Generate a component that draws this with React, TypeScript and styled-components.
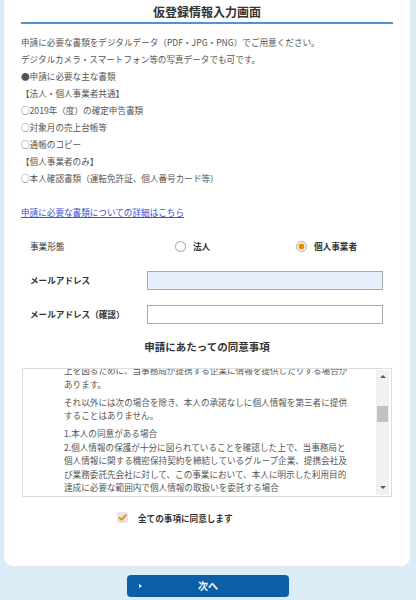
import React, { useLayoutEffect, useRef, useState } from "react";
import styled, { createGlobalStyle } from "styled-components";

const GlobalStyle = createGlobalStyle`
  body {
    margin: 0;
    background: #dcecf7;
    font-family: "Noto Sans CJK JP", "Noto Sans", sans-serif;
  }
`;

const Card = styled.div`
  margin-left: 4px;
  width: 406px;
  box-sizing: border-box;
  background: #fff;
  border-radius: 0 0 9px 9px;
  padding: 4px 17px 41px;
`;

const Title = styled.h1`
  margin: 0;
  padding-bottom: 2px;
  font-size: 12px;
  line-height: 16px;
  font-weight: bold;
  text-align: center;
  color: #333;
  border-bottom: 2px solid #4f93d2;
`;

const Intro = styled.div`
  margin-top: 9.5px;
  font-size: 8.6px;
  line-height: 17px;
  color: #555;
`;

const Line = styled.p`
  margin: 0;
`;

const DetailLink = styled.a`
  display: block;
  margin-top: 17px;
  color: #3b4fd4;
  text-decoration: underline;
`;

const Form = styled.div`
  margin-top: 8.5px;
  padding: 0 10px 0 9px;
`;

const FormRow = styled.div`
  display: grid;
  grid-template-columns: 117px 1fr;
  align-items: center;
  height: 34px;
`;

const Label = styled.span<{ $bold?: boolean }>`
  font-size: 8.6px;
  font-weight: ${p => (p.$bold ? "bold" : "normal")};
  color: #333;
`;

const TextInput = styled.input<{ $filled?: boolean }>`
  width: 100%;
  height: 19px;
  box-sizing: border-box;
  margin: 0;
  border: 1px solid #a9a9a9;
  background: ${p => (p.$filled ? "#e8f0fe" : "#fff")};
  outline: none;
`;

const RadioGroup = styled.div`
  display: flex;
  padding-left: 28px;
`;

const RadioOption = styled.label`
  display: flex;
  align-items: center;
  gap: 7px;
  width: 121px;
  font-size: 8.6px;
  font-weight: bold;
  color: #333;
`;

const RadioMark = styled.input.attrs({ type: "radio" })`
  appearance: none;
  margin: 0;
  width: 11px;
  height: 11px;
  border-radius: 50%;
  border: 1px solid #aaa;
  background: #fff;
  box-shadow: 0 0 1px rgba(0, 0, 0, 0.15);

  &:checked {
    border-color: #bbb;
    background: #f08a00;
    box-shadow: inset 0 0 0 1.5px #fff;
  }
`;

const SectionTitle = styled.h2`
  margin: 8px 0 13.5px;
  font-size: 10.5px;
  line-height: 15px;
  font-weight: bold;
  text-align: center;
  color: #333;
`;

const ScrollFrame = styled.div`
  position: relative;
  margin: 0 1px;
  height: 129px;
  box-sizing: border-box;
  border: 1px solid #ddd;
`;

const ScrollBox = styled.div`
  height: 100%;
  box-sizing: border-box;
  overflow-y: scroll;
  padding: 0 36px 0 41px;
  font-size: 8.6px;
  line-height: 13.5px;
  color: #555;
  scrollbar-width: none;

  &::-webkit-scrollbar {
    display: none;
  }
`;

const Para = styled.p`
  margin: 0 0 4.5px;
`;

const ScrollBar = styled.div`
  position: absolute;
  top: 1px;
  bottom: 1px;
  right: 2px;
  width: 13px;
  display: flex;
  flex-direction: column;
  background: #f1f1f1;
`;

const ScrollArrow = styled.div<{ $down?: boolean }>`
  flex: none;
  height: 14px;
  display: flex;
  align-items: center;
  justify-content: center;

  &::before {
    content: "";
    border-left: 3px solid transparent;
    border-right: 3px solid transparent;
    ${p => (p.$down ? "border-top: 3px solid #555;" : "border-bottom: 3px solid #555;")}
  }
`;

const ScrollTrack = styled.div`
  position: relative;
  flex: 1;
`;

const ScrollThumb = styled.div`
  position: absolute;
  left: 1px;
  right: 1px;
  background: #c1c1c1;
`;

const AgreeRow = styled.label`
  display: flex;
  align-items: center;
  gap: 10px;
  margin-top: 14px;
  padding-left: 96px;
  font-size: 8.6px;
  line-height: 14px;
  font-weight: bold;
  color: #333;
  cursor: pointer;
`;

const CheckBox = styled.span`
  display: flex;
  align-items: center;
  justify-content: center;
  width: 11px;
  height: 11px;
  border-radius: 2px;
  background: #e4e4e4;
`;

const NextButton = styled.button`
  position: relative;
  display: block;
  margin: 9px auto 0;
  width: 162px;
  height: 22px;
  border: none;
  border-radius: 4px;
  background: #0c5ea7;
  color: #fff;
  font-family: inherit;
  font-size: 10px;
  font-weight: bold;

  &::before {
    content: "";
    position: absolute;
    left: 12px;
    top: 9px;
    border-left: 3px solid #fff;
    border-top: 2px solid transparent;
    border-bottom: 2px solid transparent;
  }
`;

const TRACK = 97;

const App = () => {
  const [corp, setCorp] = useState("individual");
  const [agree, setAgree] = useState(true);
  const [thumb, setThumb] = useState({ top: 0, height: 20 });
  const boxRef = useRef<HTMLDivElement>(null);
  const anchorRef = useRef<HTMLParagraphElement>(null);

  const updateThumb = () => {
    const box = boxRef.current;
    if (!box) return;
    const height = Math.max(12, (box.clientHeight / box.scrollHeight) * TRACK);
    const top = (box.scrollTop / (box.scrollHeight - box.clientHeight)) * (TRACK - height);
    setThumb({ top, height });
  };

  useLayoutEffect(() => {
    if (boxRef.current && anchorRef.current) {
      boxRef.current.scrollTop = anchorRef.current.offsetTop - boxRef.current.offsetTop - 27;
    }
    updateThumb();
  }, []);

  return (
    <>
      <GlobalStyle />
      <Card>
        <Title>仮登録情報入力画面</Title>
        <Intro>
          <Line>申請に必要な書類をデジタルデータ（PDF・JPG・PNG）でご用意ください。</Line>
          <Line>デジタルカメラ・スマートフォン等の写真データでも可です。</Line>
          <Line>●申請に必要な主な書類</Line>
          <Line>【法人・個人事業者共通】</Line>
          <Line>○2019年（度）の確定申告書類</Line>
          <Line>○対象月の売上台帳等</Line>
          <Line>○通帳のコピー</Line>
          <Line>【個人事業者のみ】</Line>
          <Line>○本人確認書類（運転免許証、個人番号カード等）</Line>
          <DetailLink href="#">申請に必要な書類についての詳細はこちら</DetailLink>
        </Intro>

        <Form>
          <FormRow>
            <Label>事業形態</Label>
            <RadioGroup>
              <RadioOption>
                <RadioMark name="corp" checked={corp === "corp"} onChange={() => setCorp("corp")} />
                法人
              </RadioOption>
              <RadioOption>
                <RadioMark name="corp" checked={corp === "individual"} onChange={() => setCorp("individual")} />
                個人事業者
              </RadioOption>
            </RadioGroup>
          </FormRow>
          <FormRow>
            <Label $bold>メールアドレス</Label>
            <TextInput type="email" $filled />
          </FormRow>
          <FormRow>
            <Label $bold>メールアドレス（確認）</Label>
            <TextInput type="email" />
          </FormRow>
        </Form>

        <SectionTitle>申請にあたっての同意事項</SectionTitle>
        <ScrollFrame>
          <ScrollBox ref={boxRef} onScroll={updateThumb}>
            <Para style={{ paddingTop: 12 }}>【個人情報の取扱いについて】</Para>
            <Para>
              本事業の申請にあたり、ご提供いただいた個人情報は、当事務局において適切に管理し、以下の目的のために利用いたします。
            </Para>
            <Para>
              1.本事業の申請内容の確認、審査及び給付に関する手続きのため<br />
              2.申請者への連絡、お問い合わせへの対応のため<br />
              3.本事業の効果検証及び統計資料の作成のため
            </Para>
            <Para>ご提供いただいた個人情報は、上記の目的以外には利用いたしません。</Para>
            <Para>
              当事務局は、ご提供いただいた個人情報について、漏えい、滅失又はき損の防止その他の安全管理のために必要かつ適切な措置を講じます。
            </Para>
            <Para>
              また、申請者の利便性の向上及び本事業に関する各種サービスの質の向<br />
              上を図るために、当事務局が提携する企業に情報を提供したりする場合が<br />
              あります。
            </Para>
            <Para ref={anchorRef}>
              それ以外には次の場合を除き、本人の承諾なしに個人情報を第三者に提供<br />
              することはありません。
            </Para>
            <Para>
              1.本人の同意がある場合<br />
              2.個人情報の保護が十分に図られていることを確認した上で、当事務局と<br />
              個人情報に関する機密保持契約を締結しているグループ企業、提携会社及<br />
              び業務委託先会社に対して、この事業において、本人に明示した利用目的<br />
              達成に必要な範囲内で個人情報の取扱いを委託する場合<br />
              3.法令に基づく場合<br />
              4.人の生命、身体又は財産の保護のために必要がある場合であって、本人の同意を得ることが困難であるとき<br />
              5.国の機関若しくは地方公共団体又はその委託を受けた者が法令の定める事務を遂行することに対して協力する必要がある場合
            </Para>
            <Para>
              個人情報の開示、訂正、追加、削除、利用停止等のご請求及びお問い合わせについては、当事務局のお問い合わせ窓口までご連絡ください。ご本人であることを確認させていただいた上で、合理的な期間内に対応いたします。
            </Para>
            <Para>
              申請内容に虚偽があった場合や、不正な手段により給付を受けた場合には、給付金の返還を求めるとともに、必要に応じて関係機関へ通報することがあります。
            </Para>
            <Para>
              本同意事項の内容は、法令の改正その他の事由により、予告なく変更する場合があります。変更後の内容は、本事業のホームページに掲載した時点から効力を生じるものとします。
            </Para>
            <Para>
              申請者は、申請にあたり入力した情報が正確かつ最新のものであることを保証するものとします。入力内容の誤りにより生じた不利益について、当事務局は一切の責任を負いません。
            </Para>
            <Para>
              仮登録後、登録いただいたメールアドレス宛に本登録用のURLをお送りします。迷惑メール対策等でドメイン指定受信を設定されている場合は、事前に受信設定をご確認ください。
            </Para>
            <Para>
              送信されたURLの有効期限は24時間です。期限を過ぎた場合は、お手数ですが再度仮登録の手続きを行ってください。
            </Para>
            <Para>本事業の給付対象となるのは、申請要件を全て満たす法人及び個人事業者に限ります。</Para>
            <Para>
              【お問い合わせ窓口】<br />
              仮登録受付事務局　コールセンター<br />
              受付時間：平日9:00〜17:00（土日祝日・年末年始を除く）
            </Para>
            <Para style={{ paddingBottom: 12 }}>
              上記の内容に同意いただける場合は、「全ての事項に同意します」にチェックを入れてください。
            </Para>
          </ScrollBox>
          <ScrollBar>
            <ScrollArrow />
            <ScrollTrack>
              <ScrollThumb style={{ top: thumb.top, height: thumb.height }} />
            </ScrollTrack>
            <ScrollArrow $down />
          </ScrollBar>
        </ScrollFrame>

        <AgreeRow onClick={() => setAgree(!agree)}>
          <CheckBox>
            {agree && (
              <svg width="9" height="9" viewBox="0 0 10 10">
                <path d="M1.5 5.2 L4 7.6 L8.6 2.4" fill="none" stroke="#f08a00" strokeWidth="2" strokeLinecap="round" strokeLinejoin="round" />
              </svg>
            )}
          </CheckBox>
          全ての事項に同意します
        </AgreeRow>
      </Card>
      <NextButton>次へ</NextButton>
    </>
  );
};

export default App;
